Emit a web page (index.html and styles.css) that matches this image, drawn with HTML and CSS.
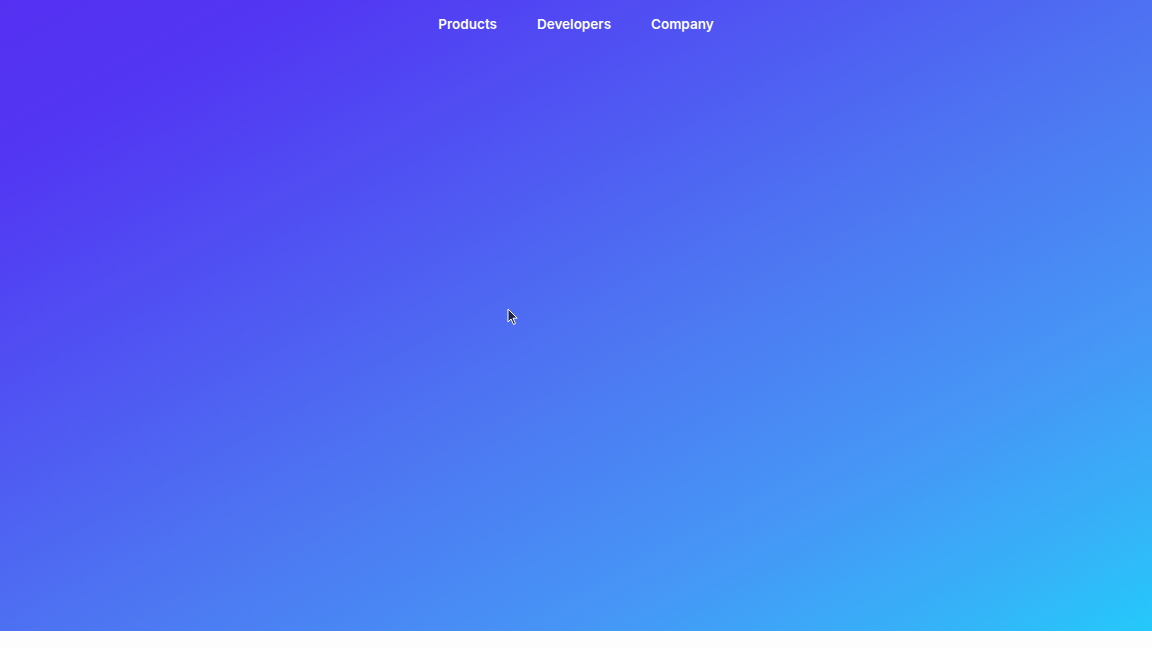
FILE: index.html
```html
<!DOCTYPE html>
<html lang="en">
<head>
<meta charset="utf-8">
<title>Home</title>
<link rel="stylesheet" href="styles.css">
</head>
<body>
<header class="hero">
  <nav class="nav">
    <a class="nav-link" href="#">Products</a>
    <a class="nav-link" href="#">Developers</a>
    <a class="nav-link" href="#">Company</a>
  </nav>
  <svg class="cursor" width="12" height="18" viewBox="0 0 12 18" aria-hidden="true">
    <path d="M1 1 L1 14 L4 11 L6.5 16.5 L8.5 15.6 L6 10.2 L10.2 10.2 Z" fill="#1e2350" stroke="#ffffff" stroke-width="1" stroke-linejoin="round"/>
  </svg>
</header>
<main class="below"></main>
</body>
</html>
```

FILE: styles.css
```css
html, body {
  margin: 0;
  padding: 0;
}
body {
  background: #fdfdfd;
  font-family: Inter, "Open Sans", "Liberation Sans", sans-serif;
}
.hero {
  position: relative;
  height: 631px;
  background: linear-gradient(to bottom right, #5530f2 0%, #5237f3 14%, #4f5cf2 38%, #4d78f2 55%, #4696f6 75%, #36b2f8 90%, #24c9fb 100%);
}
.nav {
  display: flex;
  justify-content: center;
  gap: 40px;
  padding-top: 15px;
}
.nav-link {
  color: #ffffff;
  text-decoration: none;
  font-size: 13.5px;
  font-weight: 600;
  letter-spacing: 0;
  line-height: 18px;
}
.cursor {
  position: absolute;
  left: 507px;
  top: 308px;
}
.below {
  height: 17px;
  background: #fdfdfd;
}
```
